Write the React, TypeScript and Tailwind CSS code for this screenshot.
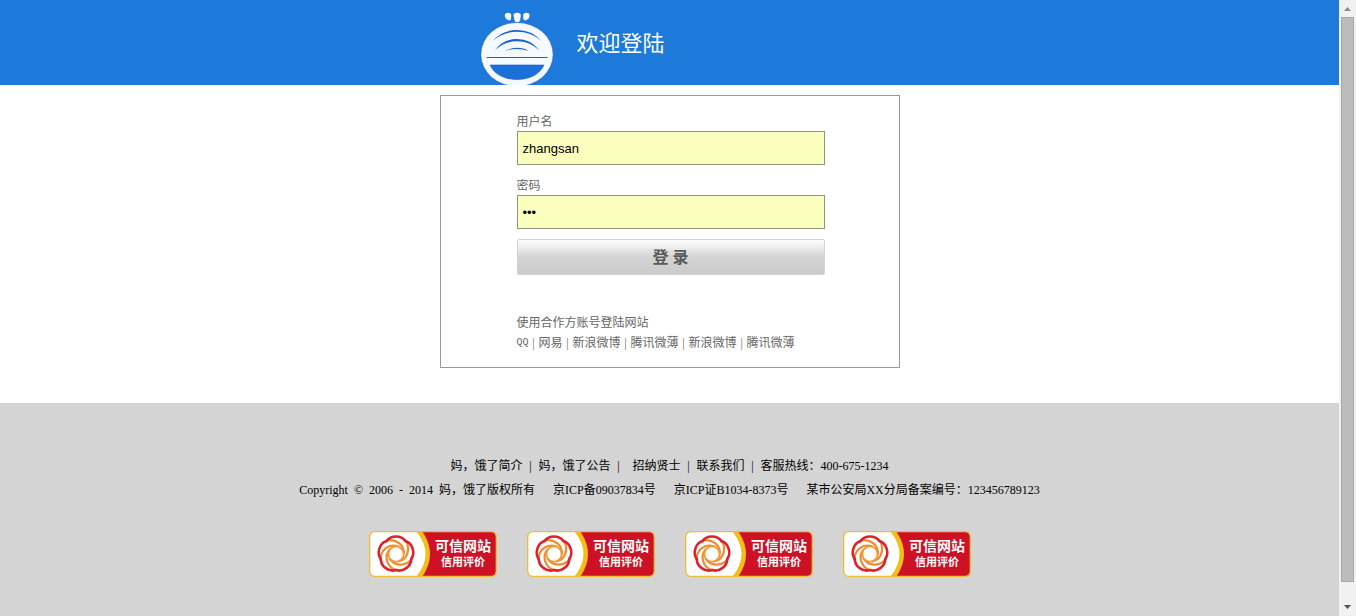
import { Fragment, useState } from "react";
import type { FormEvent } from "react";

const partners = ["QQ", "网易", "新浪微博", "腾讯微薄", "新浪微博", "腾讯微薄"];

const footerLinks = ["妈，饿了简介", "妈，饿了公告", "招纳贤士", "联系我们"];

const badges = [1, 2, 3, 4];

const petals = [0, 72, 144, 216, 288];

const Logo = () => (
  <svg viewBox="0 0 74 73" className="h-[73px] w-[74px]" aria-hidden="true">
    <g fill="#f4faff">
      <path d="M24.8 3.5Q24.8 0.8 28 0.8Q31.2 0.8 31.2 3.5L31 7Q30.6 8.8 28.6 8.3Q25 7 24.8 3.5Z" />
      <path d="M33.6 3.5Q33.6 0.8 37.2 0.8Q40.8 0.8 40.8 3.5L40.2 8Q39.5 10.6 37.2 10.6Q35 10.6 34.4 8Z" />
      <path d="M49.6 3.5Q49.6 0.8 46.4 0.8Q43.2 0.8 43.2 3.5L43.4 7Q43.8 8.8 45.8 8.3Q49.4 7 49.6 3.5Z" />
      <ellipse cx="37" cy="42.5" rx="36.2" ry="32" stroke="#1b58cc" strokeWidth="0.6" />
    </g>
    <g fill="#1c5fd2">
      <path d="M12.5 29Q22 18 37 18Q52 18 61.5 29Q51 19.8 37 19.8Q23 19.8 12.5 29Z" />
      <path d="M15 38.5Q23 27 37 27Q51 27 59.5 38.5Q50 29.2 37 29.2Q24 29.2 15 38.5Z" />
      <path d="M25 39Q30 35.8 37 35.8Q44 35.8 48.5 39Q43 37 37 37Q30 37 25 39Z" />
      <rect x="6.5" y="45" width="61" height="1" />
    </g>
    <path d="M10 53H64C60 62 50 67.5 37 67.5C24 67.5 14 62 10 53Z" fill="#1c70d6" stroke="#1c5fd2" strokeWidth="0.6" />
    <path d="M23 73Q37 76 51 73Z" fill="#f4faff" />
  </svg>
);

const TrustBadge = ({ id }: { id: number }) => (
  <svg viewBox="0 0 128 46" className="h-[46px] w-32" role="img" aria-label="可信网站 信用评价">
    <clipPath id={`badge-${id}`}>
      <rect x="1" y="1" width="126" height="44" rx="4" />
    </clipPath>
    <g clipPath={`url(#badge-${id})`}>
      <rect width="128" height="46" fill="#cf1126" />
      <path d="M0 0H53Q69 23 53 46H0Z" fill="#f5be16" />
      <path d="M0 0H47Q66 23 47 46H0Z" fill="#fff" />
    </g>
    <rect x="0.7" y="0.7" width="126.6" height="44.6" rx="5" fill="none" stroke="#edbd35" strokeWidth="1.3" />
    <g transform="translate(27 23)" fill="none" strokeLinecap="round">
      {petals.map((angle) => (
        <g key={angle} transform={`rotate(${angle})`}>
          <path d="M-8.6 -13.6C0 -15 8.5 -9.5 7.8 0" stroke="#f18a2b" strokeWidth="2.2" />
        </g>
      ))}
      {petals.map((angle) => (
        <path
          key={angle}
          d="M-9.4 -13C-5 -19 5 -19 9.4 -13"
          transform={`rotate(${angle})`}
          stroke="#e0202c"
          strokeWidth="2.6"
        />
      ))}
      <circle r="7.6" fill="#fff" stroke="#f39a35" strokeWidth="1.8" />
    </g>
    <g fill="#fff" fontFamily="'Noto Sans CJK SC', sans-serif" fontWeight="700">
      <text x="66" y="20" fontSize="14">可信网站</text>
      <text x="72" y="35" fontSize="11">信用评价</text>
    </g>
  </svg>
);

const ScrollBar = () => (
  <div className="flex w-[17px] shrink-0 flex-col items-center bg-[#f1f1f1]" aria-hidden="true">
    <svg viewBox="0 0 17 17" className="h-[17px] w-[17px]">
      <path d="M5 11L8.5 7L12 11Z" fill="#8b8b8b" />
    </svg>
    <div className="w-[13px] flex-1 border border-[#a8a8a8] bg-[#bcbcbc]" />
    <div className="h-[17px]" />
    <svg viewBox="0 0 17 17" className="h-[17px] w-[17px]">
      <path d="M5 6L8.5 10L12 6Z" fill="#505050" />
    </svg>
  </div>
);

const LoginForm = () => {
  const [username, setUsername] = useState("zhangsan");
  const [password, setPassword] = useState("123");

  const handleSubmit = (e: FormEvent) => {
    e.preventDefault();
  };

  const labelStyle = "pt-0.5 leading-[18px]";
  const inputStyle =
    "mb-2.5 h-[34px] border border-[#929282] bg-[#faffbd] px-[5px] font-['Liberation_Sans',sans-serif] text-[13px] text-black outline-none";

  return (
    <form onSubmit={handleSubmit} className="flex flex-col">
      <label htmlFor="username" className={labelStyle}>用户名</label>
      <input
        id="username"
        type="text"
        value={username}
        onChange={(e) => setUsername(e.target.value)}
        className={inputStyle}
      />
      <label htmlFor="password" className={labelStyle}>密码</label>
      <input
        id="password"
        type="password"
        value={password}
        onChange={(e) => setPassword(e.target.value)}
        className={inputStyle}
      />
      <button
        type="submit"
        className="h-9 rounded-xs border border-[#d0d2e0] bg-linear-to-b from-white via-[#d4d4d4] to-[#cbcbcb] pt-0.5 text-base font-bold text-[#5a5a5a]"
      >
        登 录
      </button>
    </form>
  );
};

export default function App() {
  return (
    <div className="flex min-h-screen bg-white font-['Liberation_Serif','Noto_Sans_CJK_SC',sans-serif] text-xs">
      <div className="flex min-w-0 flex-1 flex-col">
        <header className="bg-[#1d79da]">
          <div className="mx-auto flex max-w-[460px] items-center px-10 pt-3">
            <Logo />
            <h1 className="ml-[23px] pb-2.5 text-[22px] leading-8 text-white">欢迎登陆</h1>
          </div>
        </header>

        <main className="px-4 pt-2.5 pb-[35px]">
          <section className="mx-auto max-w-[460px] border border-[#999] pt-[15px] pr-[74px] pb-3.5 pl-[76px] text-[#666]">
            <LoginForm />
            <p className="mt-[38px] leading-5">使用合作方账号登陆网站</p>
            <nav className="flex flex-wrap leading-5">
              {partners.map((name, i) => (
                <Fragment key={i}>
                  {i > 0 && <span className="w-2.5 text-center">|</span>}
                  <a href="#" className={i === 0 ? "font-['Liberation_Mono',monospace] text-[10px]" : ""}>
                    {name}
                  </a>
                </Fragment>
              ))}
            </nav>
          </section>
        </main>

        <footer className="flex flex-1 flex-col items-center bg-[#d4d4d4] px-4 pt-[51px] pb-9 leading-6 text-black">
          <div className="flex flex-wrap justify-center">
            {footerLinks.map((name) => (
              <Fragment key={name}>
                <a href="#" className={name === "招纳贤士" ? "pl-1.5" : ""}>{name}</a>
                <span className="w-4 text-center">|</span>
              </Fragment>
            ))}
            <span>客服热线：400-675-1234</span>
          </div>
          <div className="flex flex-wrap justify-center gap-x-[18px]">
            <p className="flex gap-1.5">
              <span>Copyright</span>
              <span>©</span>
              <span>2006</span>
              <span>-</span>
              <span>2014</span>
              <span>妈，饿了版权所有</span>
            </p>
            <span>京ICP备09037834号</span>
            <span>京ICP证B1034-8373号</span>
            <span>某市公安局XX分局备案编号：123456789123</span>
          </div>
          <div className="mt-[29px] flex flex-wrap justify-center gap-[30px]">
            {badges.map((id) => (
              <a key={id} href="#" className="block">
                <TrustBadge id={id} />
              </a>
            ))}
          </div>
        </footer>
      </div>
      <ScrollBar />
    </div>
  );
}
